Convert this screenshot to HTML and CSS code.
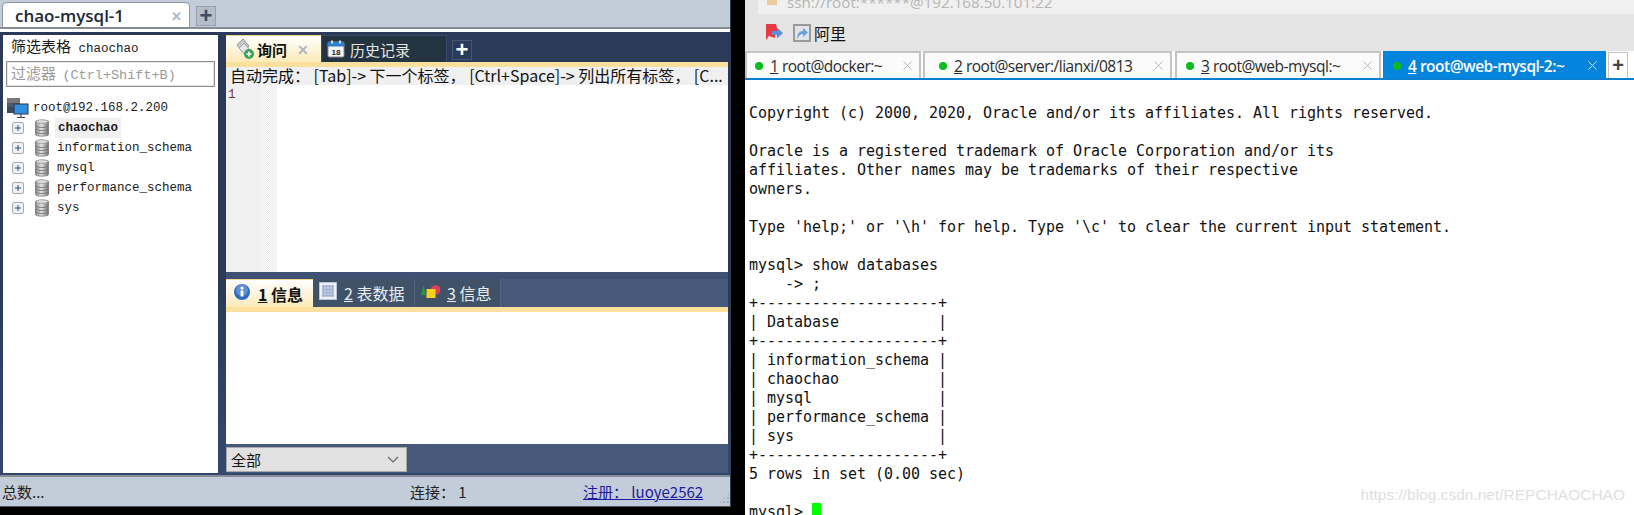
FILE: index.html
```html
<!DOCTYPE html>
<html lang="zh">
<head>
<meta charset="utf-8">
<title>SQLyog / Xshell</title>
<link rel="stylesheet" href="styles.css">
</head>
<body>
<svg class="defs" width="0" height="0" aria-hidden="true">
  <defs>
    <linearGradient id="dbg" x1="0" x2="1" y1="0" y2="0">
      <stop offset="0" stop-color="#8d8d8d"/><stop offset=".45" stop-color="#e4e4e4"/><stop offset="1" stop-color="#777"/>
    </linearGradient>
    <symbol id="db" viewBox="0 0 16 20">
      <path d="M1.5 3.5C1.5 1.8 14.5 1.8 14.5 3.5V16.5C14.5 18.7 1.5 18.7 1.5 16.5Z" fill="url(#dbg)" stroke="#777" stroke-width=".8"/>
      <ellipse cx="8" cy="3.6" rx="6" ry="1.8" fill="#dcdcdc" stroke="#888" stroke-width=".6"/>
      <path d="M2 8C4 10 12 10 14 8M2 11C4 13 12 13 14 11M2 14C4 16 12 16 14 14" fill="none" stroke="#666" stroke-width=".8"/>
    </symbol>
    <symbol id="exp" viewBox="0 0 12 12">
      <rect x=".5" y=".5" width="11" height="11" rx="1.5" fill="#eef1f6" stroke="#a3aab5"/>
      <path d="M3 6H9M6 3V9" stroke="#35507e" stroke-width="1"/>
    </symbol>
    <symbol id="tabx" viewBox="0 0 9 9">
      <path d="M.5 .5L8.500 8.500M8.500 .5L.5 8.500" stroke="currentColor" stroke-width="1" fill="none"/>
    </symbol>
  </defs>
</svg>
<main class="sqlyog">
  <header class="conn-bar">
    <div class="conn-tab"><span class="conn-name">chao-mysql-1</span><span class="conn-close">✕</span></div>
    <div class="conn-add">+</div>
  </header>
  <div class="white-rule"></div>
  <div class="workspace">
    <aside class="browser">
      <div class="filter-label">筛选表格 <span class="mono filter-db">chaochao</span></div>
      <div class="filter-input">过滤器 <span class="mono filter-hint">(Ctrl+Shift+B)</span></div>
      <div class="tree-root">
        <svg class="ico-server" viewBox="0 0 22 20"><rect x="0" y="0" width="13" height="5" fill="#777"/><rect x="0" y="5" width="13" height="4" fill="#4a5a70"/><rect x="0" y="9" width="9" height="6" fill="#3b4a5e"/><rect x="7" y="6" width="14" height="10" fill="#2f8fe0" stroke="#334" stroke-width="1"/><path d="M14 16V19M10 19.5H18" stroke="#444" stroke-width="1.2"/></svg>
        <span class="mono">root@192.168.2.200</span>
      </div>
      <ul class="tree">
        <li class="tree-row"><svg class="ico-exp"><use href="#exp"/></svg><svg class="ico-db"><use href="#db"/></svg><span class="mono selected">chaochao</span></li>
        <li class="tree-row"><svg class="ico-exp"><use href="#exp"/></svg><svg class="ico-db"><use href="#db"/></svg><span class="mono">information_schema</span></li>
        <li class="tree-row"><svg class="ico-exp"><use href="#exp"/></svg><svg class="ico-db"><use href="#db"/></svg><span class="mono">mysql</span></li>
        <li class="tree-row"><svg class="ico-exp"><use href="#exp"/></svg><svg class="ico-db"><use href="#db"/></svg><span class="mono">performance_schema</span></li>
        <li class="tree-row"><svg class="ico-exp"><use href="#exp"/></svg><svg class="ico-db"><use href="#db"/></svg><span class="mono">sys</span></li>
      </ul>
    </aside>
    <section class="mainpane">
      <div class="qtabs">
        <div class="qtab active">
          <svg class="ico-query" viewBox="0 0 20 22"><path d="M2 7L8 1L14 8L8 14Z" fill="#c9cdd0" stroke="#8c9499"/><path d="M4 10L9 5L15 12L10 17Z" fill="#e3e5e6" stroke="#9aa1a5"/><circle cx="14" cy="16" r="5" fill="#3ea05a"/><path d="M11.5 16H16.5M14 13.5V18.5" stroke="#fff" stroke-width="1.6"/></svg>
          <span class="qtab-label">询问</span><span class="x">✕</span>
        </div>
        <div class="qtab hist">
          <svg class="ico-cal" viewBox="0 0 18 18"><rect x="1" y="2" width="16" height="15" rx="1.5" fill="#f4f4f2" stroke="#889"/><rect x="1" y="2" width="16" height="4.5" fill="#2f7fd0"/><rect x="4" y="0.5" width="2" height="3" fill="#cde"/><rect x="12" y="0.5" width="2" height="3" fill="#cde"/><text x="9" y="14.5" class="cal-num">18</text></svg>
          <span>历史记录</span>
        </div>
        <div class="qadd">+</div>
      </div>
      <div class="yellow"></div>
      <div class="hint">自动完成： [Tab]-&gt; 下一个标签， [Ctrl+Space]-&gt; 列出所有标签， [C...</div>
      <div class="editor">
        <div class="gutter"><span class="lineno">1</span></div>
        <div class="fold"></div>
      </div>
      <div class="splitter"></div>
      <div class="lower">
        <div class="rtabs">
          <div class="rtab active one">
            <svg class="ico-info" viewBox="0 0 18 18"><circle cx="9" cy="9" r="8" fill="#2f6cc0"/><circle cx="9" cy="7" r="6" fill="#7fa9de" opacity=".6"/><rect x="7.6" y="7.5" width="2.8" height="6" fill="#fff"/><circle cx="9" cy="5" r="1.6" fill="#fff"/></svg>
            <span><u>1</u> 信息</span>
          </div>
          <div class="rtab two">
            <svg class="ico-table" viewBox="0 0 18 18"><rect x=".5" y=".5" width="17" height="17" fill="#eef2f8" stroke="#b8c4d6"/><path d="M3 3H15V15H3ZM3 6H15M3 9H15M3 12H15M6 3V15M9 3V15M12 3V15" fill="#8fa3c6" stroke="#dbe3ef" stroke-width=".7"/></svg>
            <span><u>2</u> 表数据</span>
          </div>
          <div class="rtab three">
            <svg class="ico-shapes" viewBox="0 0 20 14"><path d="M0 10L2.5 0L5 10Z" fill="#1d9a46"/><circle cx="14.500" cy="5" r="4.800" fill="#e0405a"/><rect x="5.500" y="4" width="9" height="9" fill="#f6d020"/></svg>
            <span><u>3</u> 信息</span>
          </div>
        </div>
        <div class="yellow"></div>
        <div class="results"></div>
        <div class="combo-strip">
          <div class="combo"><span>全部</span><svg class="chev" viewBox="0 0 12 7"><path d="M1 1L6 6L11 1" fill="none" stroke="#666" stroke-width="1.200"/></svg></div>
        </div>
      </div>
    </section>
  </div>
  <footer class="status">
    <span class="st-total">总数...</span>
    <span class="st-conn">连接： 1</span>
    <a class="st-reg">注册： luoye2562</a>
    <span class="grip"></span>
  </footer>
</main>

<main class="xshell">
  <div class="addr"><span class="folder"></span><span class="addr-text">ssh://root:******@192.168.50.101:22</span></div>
  <div class="toolbar">
    <svg class="ico-flag" viewBox="0 0 17 17"><path d="M0 0H10L12 8L9 10V14L3 12L0 16Z" fill="#e63946"/><path d="M6 7H11V3.500L17 9L11 14.500V11H6Z" fill="#5b8fd6"/></svg>
    <span class="shortcut"><svg viewBox="0 0 14 14"><path d="M2 13C2 7 5 5 8 5V2L13 6.500L8 11V8C6 8 4 9 2 13Z" fill="#6aa3dc"/></svg></span>
    <span class="tb-label">阿里</span>
  </div>
  <nav class="stabs">
    <div class="stab s1"><i class="dot"></i><span class="stab-text"><u>1</u> root@docker:~</span><svg class="stab-x"><use href="#tabx"/></svg></div>
    <div class="stab s2"><i class="dot"></i><span class="stab-text"><u>2</u> root@server:/lianxi/0813</span><svg class="stab-x"><use href="#tabx"/></svg></div>
    <div class="stab s3"><i class="dot"></i><span class="stab-text"><u>3</u> root@web-mysql:~</span><svg class="stab-x"><use href="#tabx"/></svg></div>
    <div class="stab s4 on"><i class="dot"></i><span class="stab-text"><u>4</u> root@web-mysql-2:~</span><svg class="stab-x"><use href="#tabx"/></svg></div>
    <div class="stab-add">+</div>
  </nav>
  <div class="term">
<pre class="term-text">

Copyright (c) 2000, 2020, Oracle and/or its affiliates. All rights reserved.

Oracle is a registered trademark of Oracle Corporation and/or its
affiliates. Other names may be trademarks of their respective
owners.

Type 'help;' or '\h' for help. Type '\c' to clear the current input statement.

mysql&gt; show databases
    -&gt; ;
+--------------------+
| Database           |
+--------------------+
| information_schema |
| chaochao           |
| mysql              |
| performance_schema |
| sys                |
+--------------------+
5 rows in set (0.00 sec)

mysql&gt; <span class="cursor"></span></pre>
    <span class="watermark">https://blog.csdn.net/REPCHAOCHAO</span>
  </div>
</main>
</body>
</html>
```
FILE: styles.css
```css
* { box-sizing: border-box; }
html, body { margin: 0; padding: 0; }
body {
  width: 1634px;
  height: 515px;
  overflow: hidden;
  background: #000;
  display: flex;
  font-family: "Noto Sans CJK SC", "Liberation Sans", sans-serif;
}
.defs { position: absolute; }
.mono { font-family: "Liberation Mono", "Noto Sans CJK SC", monospace; font-size: 12.5px; }

/* ---------- left window ---------- */
.sqlyog {
  width: 731px;
  height: 507px;
  display: flex;
  flex-direction: column;
  border-right: 1px solid #333c4c;
  border-bottom: 1px solid #4a4f58;
  flex: none;
}
.conn-bar {
  height: 29px;
  background: #c3ccd9;
  border-bottom: 2px solid #868c94;
  padding: 2px 0 0 2px;
  display: flex;
  align-items: flex-start;
  flex: none;
}
.conn-tab {
  width: 188px;
  height: 25px;
  background: #fff;
  border: 1px solid #8d96a3;
  border-bottom: 0;
  border-radius: 5px 5px 0 0;
  padding: 0 7px 0 12px;
  display: flex;
  align-items: center;
  justify-content: space-between;
}
.conn-name {
  font-family: "Open Sans", "Liberation Sans", sans-serif;
  font-weight: 600;
  font-size: 17px;
  color: #1c2838;
  white-space: nowrap;
}
.conn-close { color: #aeb8c6; font-size: 13px; font-weight: 700; }
.conn-add {
  margin: 4px 0 0 6px;
  width: 20px;
  height: 20px;
  background: #b4bdca;
  border: 1px solid #97a1ae;
  color: #3a4d68;
  font: 700 22px/17px "Liberation Sans", sans-serif;
  text-align: center;
}
.white-rule { height: 3px; background: #fff; flex: none; }
.workspace {
  flex: 1;
  min-height: 0;
  display: flex;
  gap: 8px;
  padding: 3px 2px 2px 3px;
  background: linear-gradient(#2a3a58, #2a3a58 55%, #34486e);
}

/* object browser */
.browser {
  width: 215px;
  background: #fff;
  flex: none;
  padding: 1px 3px 0;
  color: #1b1b1b;
}
.filter-label { font-size: 15px; line-height: 20px; padding-left: 5px; height: 25px; white-space: nowrap; }
.filter-db { margin-left: 4px; }
.filter-input {
  height: 26px;
  border: 1px solid #8f8f8f;
  box-shadow: inset 0 0 0 1px #e4e4e4;
  color: #9a9a9a;
  font-size: 15px;
  line-height: 21px;
  padding-left: 4px;
  white-space: nowrap;
  overflow: hidden;
}
.filter-hint { font-size: 13.5px; margin-left: 3px; }
.tree-root {
  margin-top: 11px;
  height: 20px;
  display: flex;
  align-items: center;
  gap: 4px;
  padding-left: 1px;
}
.ico-server { width: 22px; height: 20px; flex: none; }
.tree { list-style: none; margin: 0; padding: 0; }
.tree-row {
  height: 20px;
  display: flex;
  align-items: center;
  padding-left: 6px;
  white-space: nowrap;
}
.ico-exp { width: 12px; height: 12px; flex: none; }
.ico-db { width: 16px; height: 20px; flex: none; margin: 0 7px 0 10px; }
.selected { font-weight: 700; background: #f0f0f0; padding: 0 3px; margin-left: -2px; line-height: 20px; }

/* query pane */
.mainpane { flex: 1; min-width: 0; display: flex; flex-direction: column; }
.qtabs { height: 27px; display: flex; flex: none; }
.qtab {
  display: flex;
  align-items: center;
  font-size: 15px;
  white-space: nowrap;
}
.qtab.active {
  width: 95px;
  background: linear-gradient(#fff, #fdeab8);
  border-top: 1px solid #f3d58c;
  padding-left: 9px;
  color: #111;
  font-weight: 700;
}
.ico-query { width: 20px; height: 22px; flex: none; }
.qtab-label { margin-left: 2px; }
.x { color: #aeb8c6; font-size: 14px; margin-left: 10px; }
.qtab.hist {
  width: 126px;
  background: #243340;
  border: 1px solid #3a4a66;
  border-bottom: 0;
  color: #e6e6e6;
  padding-left: 5px;
  gap: 5px;
}
.ico-cal { width: 18px; height: 18px; flex: none; }
.cal-num { font: 700 8px "Liberation Sans", sans-serif; fill: #222; text-anchor: middle; }
.qadd {
  margin: 5px 0 0 5px;
  width: 20px;
  height: 20px;
  background: #2a3a58;
  border: 1px solid #44557a;
  color: #fff;
  font: 700 22px/17px "Liberation Sans", sans-serif;
  text-align: center;
}
.yellow { height: 5px; background: #fbdf9c; flex: none; }
.hint {
  height: 18px;
  background: #f0f0f0;
  font-size: 16px;
  line-height: 17px;
  padding-left: 4px;
  color: #111;
  white-space: nowrap;
  overflow: hidden;
  flex: none;
}
.editor { height: 187px; background: #fff; display: flex; flex: none; }
.gutter { width: 34px; background: #f0f0f0; padding-left: 2px; }
.lineno { display: block; font: 12.5px/20px "Liberation Mono", monospace; color: #7a3030; }
.fold {
  width: 17px;
  background: repeating-conic-gradient(#eeeeee 0 25%, #fafafa 0 50%) 0 0 / 2px 2px;
}
.splitter { height: 7px; background: #3e5172; flex: none; }
.lower { flex: 1; min-height: 0; display: flex; flex-direction: column; background: #46597a; }
.rtabs { height: 28px; display: flex; flex: none; }
.rtab {
  display: flex;
  align-items: center;
  font-size: 16px;
  color: #e8ecef;
  background: #3f5268;
  border-right: 1px solid #52647e;
  white-space: nowrap;
}
.rtab u { text-decoration-thickness: 1px; }
.rtab.active {
  background: linear-gradient(#fff, #fdeab8);
  border-top: 1px solid #f3d58c;
  border-right: 0;
  color: #111;
  font-weight: 700;
}
.one { width: 87px; padding-left: 7px; gap: 7px; }
.two { width: 102px; padding-left: 6px; gap: 7px; }
.three { width: 86px; padding-left: 6px; gap: 6px; }
.ico-info { width: 18px; height: 18px; flex: none; margin-top: -4px; }
.ico-table { width: 18px; height: 18px; flex: none; margin-top: -4px; }
.ico-shapes { width: 20px; height: 14px; flex: none; margin-top: -3px; }
.results { height: 132px; background: #fff; flex: none; }
.combo-strip { flex: 1; padding-top: 3px; }
.combo {
  width: 181px;
  height: 25px;
  background: #e1e1e1;
  border: 1px solid #a9a9a9;
  display: flex;
  align-items: center;
  justify-content: space-between;
  padding: 0 7px 0 4px;
  font-size: 15px;
  color: #111;
}
.chev { width: 12px; height: 7px; }

/* status bar */
.status {
  height: 31px;
  flex: none;
  background: #c3ccd9;
  border-top: 2px solid #868c94;
  font-size: 15px;
  color: #222;
  display: flex;
  align-items: center;
  position: relative;
  padding-left: 2px;
}
.st-total { width: 408px; }
.st-conn { width: 173px; }
.st-reg { color: #1b1b9c; text-decoration: underline; }
.grip {
  position: absolute;
  right: 0;
  bottom: 2px;
  width: 12px;
  height: 12px;
  background: radial-gradient(circle, #a4adba 1.2px, transparent 1.4px) 0 0 / 4px 4px;
  clip-path: polygon(100% 0, 100% 100%, 0 100%);
}

/* ---------- right window ---------- */
.xshell {
  margin-left: 14px;
  flex: 1;
  min-width: 0;
  height: 515px;
  display: flex;
  flex-direction: column;
  background: #fff;
  position: relative;
}
.addr {
  height: 14px;
  flex: none;
  background: linear-gradient(90deg, #e4e4e4 13px, #f0f0f0 13px);
  padding-left: 22px;
  display: flex;
  align-items: flex-end;
  gap: 10px;
  overflow: hidden;
}
.folder { width: 10px; height: 5px; background: #eccb9a; margin-bottom: 9px; flex: none; }
.addr-text {
  font: 15.200px/18px "Open Sans", "Liberation Sans", sans-serif;
  color: #b5b5b5;
  margin-bottom: 3px;
  flex: none;
}
.toolbar {
  height: 37px;
  flex: none;
  background: #e4e4e4;
  display: flex;
  align-items: center;
  padding-left: 21px;
}
.ico-flag { width: 17px; height: 17px; flex: none; }
.shortcut {
  margin-left: 10px;
  width: 18px;
  height: 18px;
  background: #dfe4ea;
  border: 2px solid #9a9a9a;
  flex: none;
  display: flex;
}
.shortcut svg { width: 14px; height: 14px; }
.tb-label { margin-left: 3px; font-size: 16px; color: #111; }
.stabs {
  height: 29px;
  flex: none;
  display: flex;
  gap: 2px;
  background: #fff;
  border-bottom: 2px solid #0a7fd0;
}
.stab {
  height: 27px;
  background: #fbfbfb;
  border: 2px solid #c4c4c4;
  border-bottom: 0;
  display: flex;
  align-items: center;
  font: 15.500px "Open Sans", "Liberation Sans", sans-serif;
  letter-spacing: -0.5px;
  color: #2b2b2b;
  white-space: nowrap;
}
.s1 { width: 176px; padding-left: 8px; }
.s2 { width: 249px; padding-left: 14px; }
.s3 { width: 206px; margin-left: 1px; padding-left: 9px; }
.s4 { width: 223px; padding-left: 8px; }
.stab.on {
  background: #0384dd;
  border-color: #0384dd;
  color: #fff;
  font-weight: 600;
}
.dot { width: 8px; height: 8px; border-radius: 50%; background: #0cbb1c; flex: none; margin-right: 7px; }
.stab-text u { text-decoration-thickness: 1px; }
.stab-x { margin-left: auto; margin-right: 7px; width: 9px; height: 9px; flex: none; color: #b8b8b8; }
.on .stab-x { color: #cfe6f7; }
.stab-add {
  margin-top: 1px;
  width: 20px;
  height: 26px;
  border: 1px solid #c4c4c4;
  border-bottom: 0;
  color: #444;
  font: 700 20px/24px "Liberation Sans", sans-serif;
  text-align: center;
}
.term { flex: 1; min-height: 0; overflow: hidden; position: relative; background: #fff; }
.term-text {
  margin: 0;
  padding: 5px 0 0 4px;
  font: 15px/19px "DejaVu Sans Mono", monospace;
  letter-spacing: -0.03px;
  color: #111;
}
.cursor { display: inline-block; width: 9px; height: 19px; background: #00ff00; vertical-align: top; }
.watermark {
  position: absolute;
  right: 9px;
  top: 406px;
  font: 15.500px "Liberation Sans", sans-serif;
  color: #e0e0e0;
  white-space: nowrap;
}
```
